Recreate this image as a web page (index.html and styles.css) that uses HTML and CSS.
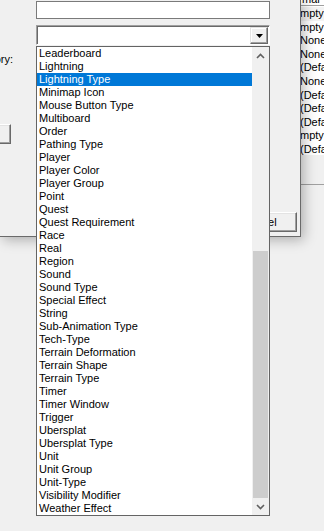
FILE: index.html
```html
<!DOCTYPE html>
<html>
<head>
<meta charset="utf-8">
<link rel="stylesheet" href="styles.css">
</head>
<body>
<div class="screen">
  <div class="bgwin">
    <div class="bghead"><span>mar</span></div>
    <div class="bglist">
      <div class="bgrow sel">mpty</div>
      <div class="bgrow">mpty</div>
      <div class="bgrow">None</div>
      <div class="bgrow">None</div>
      <div class="bgrow">(Default)</div>
      <div class="bgrow">None</div>
      <div class="bgrow">(Default)</div>
      <div class="bgrow">(Default)</div>
      <div class="bgrow">(Default)</div>
      <div class="bgrow">mpty</div>
      <div class="bgrow">(Default)</div>
    </div>
    <div class="bgpanel"></div>
  </div>

  <div class="dialog">
    <div class="row-text"><div class="textbox"></div></div>
    <div class="row-combo">
      <div class="combo">
        <div class="combo-btn">
          <svg width="7" height="4" viewBox="0 0 7 4"><path d="M0 0H7L3.5 4Z" fill="#000"/></svg>
        </div>
      </div>
    </div>
    <div class="row-label"><span class="label">Category:</span></div>
    <div class="row-leftbtn"><div class="btn leftbtn">Edit</div></div>
    <div class="row-cancel"><div class="btn cancel">Cancel</div></div>
  </div>

  <div class="dropdown">
    <ul class="items">
      <li>Leaderboard</li>
      <li>Lightning</li>
      <li class="selected">Lightning Type</li>
      <li>Minimap Icon</li>
      <li>Mouse Button Type</li>
      <li>Multiboard</li>
      <li>Order</li>
      <li>Pathing Type</li>
      <li>Player</li>
      <li>Player Color</li>
      <li>Player Group</li>
      <li>Point</li>
      <li>Quest</li>
      <li>Quest Requirement</li>
      <li>Race</li>
      <li>Real</li>
      <li>Region</li>
      <li>Sound</li>
      <li>Sound Type</li>
      <li>Special Effect</li>
      <li>String</li>
      <li>Sub-Animation Type</li>
      <li>Tech-Type</li>
      <li>Terrain Deformation</li>
      <li>Terrain Shape</li>
      <li>Terrain Type</li>
      <li>Timer</li>
      <li>Timer Window</li>
      <li>Trigger</li>
      <li>Ubersplat</li>
      <li>Ubersplat Type</li>
      <li>Unit</li>
      <li>Unit Group</li>
      <li>Unit-Type</li>
      <li>Visibility Modifier</li>
      <li>Weather Effect</li>
    </ul>
    <div class="scrollbar">
      <div class="sb-arrow">
        <svg width="9" height="6" viewBox="0 0 9 6"><path d="M1 5L4.5 1.5L8 5" fill="none" stroke="#606060" stroke-width="1.6"/></svg>
      </div>
      <div class="sb-track">
        <div class="sb-thumb"></div>
      </div>
      <div class="sb-arrow">
        <svg width="9" height="6" viewBox="0 0 9 6"><path d="M1 1L4.5 4.5L8 1" fill="none" stroke="#606060" stroke-width="1.6"/></svg>
      </div>
    </div>
  </div>
</div>
</body>
</html>
```

FILE: styles.css
```css
* { box-sizing: border-box; }
html, body { margin: 0; padding: 0; }
body {
  width: 324px;
  height: 531px;
  overflow: hidden;
  background: #f0f0f0;
  font-family: "Liberation Sans", Arial, sans-serif;
  font-size: 11px;
  color: #000;
}
.screen {
  position: relative;
  width: 324px;
  height: 531px;
  overflow: hidden;
}

/* background window (behind the dialog) */
.bgwin {
  position: absolute;
  left: 280px;
  top: 0;
  width: 44px;
  height: 260px;
  display: flex;
  flex-direction: column;
}
.bghead {
  height: 6px;
  background: #fff;
  border-bottom: 1px solid #a0a0a0;
  overflow: hidden;
  position: relative;
}
.bghead span {
  position: absolute;
  left: 22px;
  top: -7px;
  line-height: 13px;
}
.bglist {
  background: #fff;
  height: 149px;
  padding-top: 1px;
  overflow: hidden;
}
.bgrow {
  height: 13.6px;
  line-height: 13.6px;
  padding-left: 20px;
  white-space: nowrap;
}
.bgrow.sel { background: #f3f3f3; }
.bgpanel {
  height: 30px;
  background: #f0f0f0;
  border-bottom: 1px solid #a0a0a0;
}

/* dialog */
.dialog {
  position: absolute;
  left: 0;
  top: 0;
  width: 301px;
  height: 237px;
  background: #f0f0f0;
  border-right: 1px solid #6a6a6a;
  border-bottom: 1px solid #6a6a6a;
  box-shadow: 3px 3px 12px rgba(0, 0, 0, 0.28);
  display: flex;
  flex-direction: column;
  padding-top: 1px;
}
.row-text, .row-combo { padding-left: 36px; }
.textbox {
  width: 234px;
  height: 18px;
  background: #fff;
  border: 1px solid #7a7a7a;
}
.row-combo { margin-top: 6px; }
.combo {
  width: 234px;
  height: 20px;
  background: #fff;
  border-top: 1px solid #a0a0a0;
  border-left: 1px solid #a0a0a0;
  border-right: 1px solid #fff;
  border-bottom: 1px solid #fff;
  box-shadow: inset 1px 1px 0 #696969;
  display: flex;
  justify-content: flex-end;
  padding: 1px 1px 1px 1px;
}
.combo-btn {
  width: 18px;
  height: 17px;
  background: #f0f0f0;
  border-top: 1px solid #e3e3e3;
  border-left: 1px solid #e3e3e3;
  border-right: 1px solid #696969;
  border-bottom: 1px solid #696969;
  box-shadow: inset -1px -1px 0 #a0a0a0, inset 1px 1px 0 #fff;
  display: flex;
  align-items: center;
  justify-content: center;
}
.combo-btn svg { display: block; margin-top: 1px; }

.row-label {
  margin-top: 8px;
  width: 13px;
  height: 13px;
  display: flex;
  justify-content: flex-end;
  overflow: visible;
}
.label { white-space: nowrap; line-height: 13px; }

.btn {
  height: 20px;
  background: #f0f0f0;
  border-top: 1px solid #fff;
  border-left: 1px solid #fff;
  border-right: 1px solid #696969;
  border-bottom: 1px solid #696969;
  box-shadow: inset -1px -1px 0 #a0a0a0, inset 1px 1px 0 #e3e3e3;
  display: flex;
  align-items: center;
  justify-content: center;
  line-height: 13px;
  white-space: nowrap;
}
.row-leftbtn {
  margin-top: 58px;
  display: flex;
  justify-content: flex-end;
  width: 11px;
}
.leftbtn { width: 75px; flex-shrink: 0; }
.row-cancel {
  margin-top: 68px;
  display: flex;
  justify-content: flex-end;
  padding-right: 3px;
}
.cancel { width: 75px; color: #000; }

/* dropdown popup */
.dropdown {
  position: absolute;
  left: 36px;
  top: 46px;
  width: 234px;
  height: 470px;
  background: #fff;
  border: 1px solid #646464;
  display: flex;
}
.items {
  list-style: none;
  margin: 0;
  padding: 0;
  flex: 1;
}
.items li {
  height: 13px;
  line-height: 13px;
  padding-left: 2px;
  white-space: nowrap;
}
.items li.selected {
  background: #0078d7;
  color: #fff;
}
.scrollbar {
  width: 17px;
  background: #f0f0f0;
  display: flex;
  flex-direction: column;
}
.sb-arrow {
  height: 17px;
  display: flex;
  align-items: center;
  justify-content: center;
}
.sb-arrow svg { display: block; }
.sb-track {
  flex: 1;
  display: flex;
  flex-direction: column;
  justify-content: flex-end;
}
.sb-thumb {
  margin-left: 1px;
  width: 15px;
  height: 247px;
  background: #cdcdcd;
}
```
